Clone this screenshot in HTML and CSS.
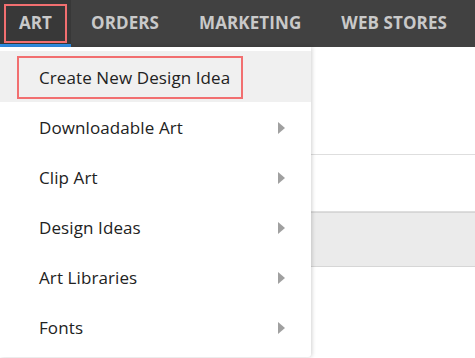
FILE: index.html
```html
<!DOCTYPE html>
<html lang="en">
<head>
  <meta charset="UTF-8" />
  <title>Art menu</title>
  <link rel="stylesheet" href="styles.css">
</head>
<body>
  <div class="topnav">
    <a class="tab active">ART</a>
    <a class="tab">ORDERS</a>
    <a class="tab">MARKETING</a>
    <a class="tab">WEB STORES</a>
  </div>

  <div class="content">
    <div class="row first"></div>
    <div class="row"></div>
    <div class="row band"></div>
  </div>

  <ul class="dropdown">
    <li class="item hover"><span class="highlight">Create New Design Idea</span></li>
    <li class="item">Downloadable Art <span class="arrow"></span></li>
    <li class="item">Clip Art <span class="arrow"></span></li>
    <li class="item">Design Ideas <span class="arrow"></span></li>
    <li class="item">Art Libraries <span class="arrow"></span></li>
    <li class="item">Fonts <span class="arrow"></span></li>
  </ul>
</body>
</html>
```

FILE: styles.css
```css
body {
  margin: 0;
  font-family: 'Open Sans', sans-serif;
  background: #fff;
  position: relative;
  height: 358px;
  overflow: hidden;
}
.topnav {
  display: flex;
  height: 47px;
  background-color: #414141;
}
.tab {
  display: flex;
  align-items: center;
  padding: 0 20px 3px;
  color: #c9c9c9;
  font-weight: bold;
  font-size: 17px;
  letter-spacing: 0.1px;
}
.tab.active {
  background-color: #383838;
  border-bottom: 3px solid #2f8de4;
  padding: 0;
  outline: 2px solid #f26f70;
  outline-offset: -6px;
  width: 71px;
  justify-content: center;
}
.content .row {
  height: 56px;
  border-bottom: 1px solid #dedede;
}
.content .row.first {
  height: 107px;
}
.content .row.band {
  background-color: #ebebeb;
  border-top: 1px solid #d6d6d6;
  border-bottom: 1px solid #d6d6d6;
  height: 53px;
}
.dropdown {
  position: absolute;
  top: 47px;
  left: 0;
  width: 311px;
  height: 310px;
  margin: 0;
  padding: 4px 0 0;
  list-style: none;
  background: #fff;
  box-shadow: 1px 0 4px rgba(0, 0, 0, 0.18);
  border-radius: 0 0 3px 0;
  box-sizing: border-box;
}
.item {
  display: flex;
  align-items: center;
  justify-content: space-between;
  height: 50px;
  padding: 1px 26px 0 39px;
  box-sizing: border-box;
  color: #222;
  font-size: 17px;
  letter-spacing: 0.1px;
}
.item.hover {
  background-color: #f0f0f0;
  padding-left: 17px;
  height: 51px;
}
.highlight {
  border: 2px solid #f26f70;
  padding: 8px 11px 8px 20px;
}
.arrow {
  width: 0;
  height: 0;
  border-top: 6px solid transparent;
  border-bottom: 6px solid transparent;
  border-left: 7px solid #a0a0a0;
}
```
